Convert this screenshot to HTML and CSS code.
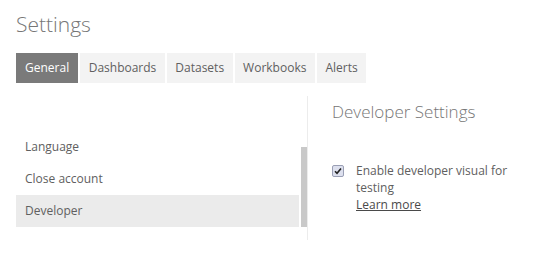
FILE: index.html
```html
<!DOCTYPE html>
<html lang="en">
<head>
    <meta charset="UTF-8">
    <title>Settings</title>
    <link rel="stylesheet" href="styles.css">
</head>
<body>

    <div class="page">
        <h1>Settings</h1>

        <div class="tabs">
            <span class="tab active">General</span>
            <span class="tab">Dashboards</span>
            <span class="tab">Datasets</span>
            <span class="tab">Workbooks</span>
            <span class="tab">Alerts</span>
        </div>

        <div class="content">
            <div class="side">
                <ul class="nav">
                    <li>Language</li>
                    <li>Close account</li>
                    <li class="selected">Developer</li>
                </ul>
                <div class="scroll-track">
                    <div class="scroll-thumb"></div>
                </div>
            </div>

            <div class="panel">
                <h2>Developer Settings</h2>
                <div class="option">
                    <span class="check">
                        <svg width="8" height="8" viewBox="0 0 8 8"><path d="M1 4.3 L3 6.3 L7 1.5" fill="none" stroke="#222" stroke-width="1.6"/></svg>
                    </span>
                    <div class="option-text">
                        Enable developer visual for testing<br>
                        <a href="#">Learn more</a>
                    </div>
                </div>
            </div>
        </div>
    </div>

</body>
</html>
```

FILE: styles.css
```css
* {
    margin: 0px;
    padding: 0px;
    box-sizing: border-box;
}

body {
    font-family: 'Open Sans', 'Noto Sans', sans-serif;
    background: #fff;
    color: #666;
}

.page {
    padding: 10px 16px 0 16px;
}

h1 {
    font-size: 21px;
    font-weight: 300;
    color: #767676;
    line-height: 28px;
}

.tabs {
    display: flex;
    gap: 2px;
    margin-top: 15px;
}

.tab {
    background: #f3f3f3;
    font-size: 12px;
    color: #606060;
    height: 30px;
    line-height: 30px;
    padding: 0 8.5px;
}

.tab.active {
    background: #7a7a7a;
    color: #fff;
    padding: 0 9px;
}

.content {
    display: flex;
    margin-top: 13px;
}

.side {
    display: flex;
    gap: 2px;
    width: 292px;
    height: 144px;
    border-right: 1px solid #ececec;
}

.nav {
    list-style: none;
    width: 283px;
    padding-top: 35px;
}

.nav li {
    height: 32px;
    line-height: 32px;
    padding-left: 9px;
    font-size: 12px;
    color: #606060;
}

.nav li.selected {
    background: #ebebeb;
}

.scroll-track {
    width: 6px;
    padding-top: 51px;
}

.scroll-thumb {
    height: 80px;
    background: #c9c9c9;
}

.panel {
    padding: 4px 0 0 24px;
}

h2 {
    font-size: 17px;
    font-weight: 300;
    color: #767676;
    line-height: 24px;
}

.option {
    display: flex;
    gap: 12px;
    margin-top: 38px;
}

.check {
    width: 12px;
    height: 12px;
    margin-top: 3px;
    border: 1px solid #9a9fb5;
    border-radius: 2px;
    background: #dde0ee;
    display: flex;
    align-items: center;
    justify-content: center;
}

.option-text {
    width: 165px;
    font-size: 12px;
    line-height: 17px;
    color: #606060;
}

.option-text a {
    color: #4a4a4a;
    text-decoration: underline;
}
```
